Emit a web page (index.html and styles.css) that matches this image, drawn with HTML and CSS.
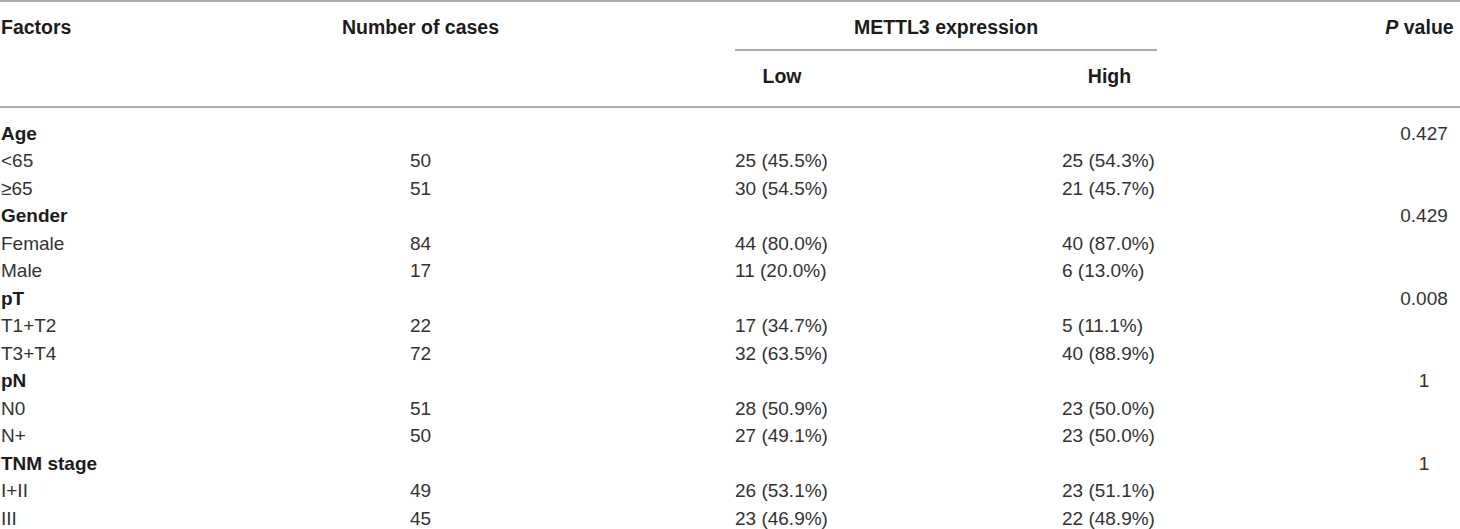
FILE: index.html
```html
<!DOCTYPE html>
<html lang="en">
<head>
<meta charset="utf-8">
<title>METTL3 expression table</title>
<link rel="stylesheet" href="styles.css">
</head>
<body>
<div class="table">
  <div class="thead">
    <div class="hrow hrow-1">
      <div class="cell c-fac">Factors</div>
      <div class="cell c-num">Number of cases</div>
      <div class="cell c-span"><span>METTL3 expression</span></div>
      <div class="cell c-p"><i>P</i> value</div>
    </div>
    <div class="hrow hrow-2">
      <div class="cell c-fac"></div>
      <div class="cell c-num"></div>
      <div class="cell c-low">Low</div>
      <div class="cell c-high">High</div>
      <div class="cell c-p"></div>
    </div>
  </div>
  <div class="tbody">
    <div class="row"><div class="cell c-fac group">Age</div><div class="cell c-num"></div><div class="cell c-low"></div><div class="cell c-high"></div><div class="cell c-p">0.427</div></div>
    <div class="row"><div class="cell c-fac">&lt;65</div><div class="cell c-num">50</div><div class="cell c-low">25 (45.5%)</div><div class="cell c-high">25 (54.3%)</div><div class="cell c-p"></div></div>
    <div class="row"><div class="cell c-fac">&ge;65</div><div class="cell c-num">51</div><div class="cell c-low">30 (54.5%)</div><div class="cell c-high">21 (45.7%)</div><div class="cell c-p"></div></div>
    <div class="row"><div class="cell c-fac group">Gender</div><div class="cell c-num"></div><div class="cell c-low"></div><div class="cell c-high"></div><div class="cell c-p">0.429</div></div>
    <div class="row"><div class="cell c-fac">Female</div><div class="cell c-num">84</div><div class="cell c-low">44 (80.0%)</div><div class="cell c-high">40 (87.0%)</div><div class="cell c-p"></div></div>
    <div class="row"><div class="cell c-fac">Male</div><div class="cell c-num">17</div><div class="cell c-low">11 (20.0%)</div><div class="cell c-high">6 (13.0%)</div><div class="cell c-p"></div></div>
    <div class="row"><div class="cell c-fac group">pT</div><div class="cell c-num"></div><div class="cell c-low"></div><div class="cell c-high"></div><div class="cell c-p">0.008</div></div>
    <div class="row"><div class="cell c-fac">T1+T2</div><div class="cell c-num">22</div><div class="cell c-low">17 (34.7%)</div><div class="cell c-high">5 (11.1%)</div><div class="cell c-p"></div></div>
    <div class="row"><div class="cell c-fac">T3+T4</div><div class="cell c-num">72</div><div class="cell c-low">32 (63.5%)</div><div class="cell c-high">40 (88.9%)</div><div class="cell c-p"></div></div>
    <div class="row"><div class="cell c-fac group">pN</div><div class="cell c-num"></div><div class="cell c-low"></div><div class="cell c-high"></div><div class="cell c-p">1</div></div>
    <div class="row"><div class="cell c-fac">N0</div><div class="cell c-num">51</div><div class="cell c-low">28 (50.9%)</div><div class="cell c-high">23 (50.0%)</div><div class="cell c-p"></div></div>
    <div class="row"><div class="cell c-fac">N+</div><div class="cell c-num">50</div><div class="cell c-low">27 (49.1%)</div><div class="cell c-high">23 (50.0%)</div><div class="cell c-p"></div></div>
    <div class="row"><div class="cell c-fac group">TNM stage</div><div class="cell c-num"></div><div class="cell c-low"></div><div class="cell c-high"></div><div class="cell c-p">1</div></div>
    <div class="row"><div class="cell c-fac">I+II</div><div class="cell c-num">49</div><div class="cell c-low">26 (53.1%)</div><div class="cell c-high">23 (51.1%)</div><div class="cell c-p"></div></div>
    <div class="row"><div class="cell c-fac">III</div><div class="cell c-num">45</div><div class="cell c-low">23 (46.9%)</div><div class="cell c-high">22 (48.9%)</div><div class="cell c-p"></div></div>
  </div>
</div>
</body>
</html>
```
FILE: styles.css
```css
html, body {
  margin: 0;
  padding: 0;
  background: #ffffff;
}

body {
  font-family: "Liberation Sans", Arial, Helvetica, sans-serif;
  font-size: 19px;
  color: #333333;
}

.table {
  width: 1460px;
}

.thead {
  border-top: 2px solid #ababab;
  border-bottom: 2px solid #ababab;
  font-weight: bold;
  font-size: 19.5px;
  color: #1c1c1c;
}

.hrow,
.row {
  display: grid;
  grid-template-columns: 339px 163px 327px 328px 303px;
}

.hrow .cell {
  line-height: 22px;
  padding-top: 14px;
}

.hrow-1 {
  height: 49px;
}

.hrow-2 {
  height: 55px;
}

.tbody {
  padding-top: 11.5px;
}

.row {
  height: 27.5px;
  line-height: 27.5px;
}

.cell {
  white-space: nowrap;
}

.c-fac {
  padding-left: 1px;
}

.c-num {
  text-align: center;
}

.c-low,
.c-high {
  padding-left: 233px;
}

.hrow .c-low,
.hrow .c-high {
  text-align: center;
}

.c-p {
  padding-left: 231px;
  text-align: center;
}

.hrow .c-p {
  padding-left: 222px;
}

.c-span {
  grid-column: span 2;
  margin-left: 233px;
  text-align: center;
  border-bottom: 2px solid #ababab;
  padding-bottom: 11px;
}

.group {
  font-weight: bold;
  color: #1c1c1c;
}
```
